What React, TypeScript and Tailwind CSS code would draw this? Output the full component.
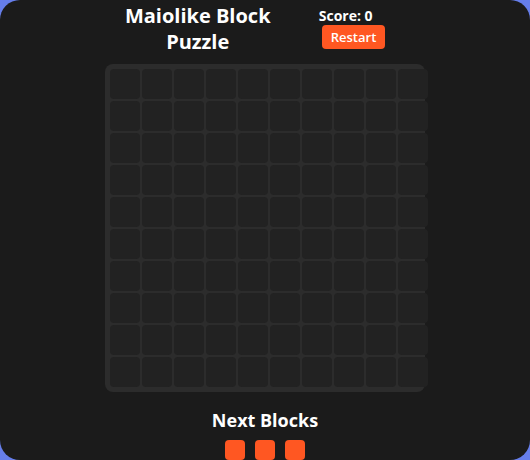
import React from "react";

export default function App() {
  const cells = Array.from({ length: 100 });
  return (
    <div className="w-[530px] h-[460px] bg-[#667eea] overflow-hidden" style={{ fontFamily: '"Open Sans", "Noto Sans", sans-serif' }}>
      <div className="w-full h-full bg-[#1b1b1b] rounded-[20px] flex flex-col items-center text-white overflow-hidden">
        <div className="flex items-start justify-center gap-[48px] pt-[3px] mr-[20px]">
          <h1 className="w-[146px] text-center text-[20px] leading-[26px] font-bold">Maiolike Block Puzzle</h1>
          <div className="flex flex-col items-start pt-[6px]">
            <div className="text-[14px] leading-[14px] font-bold">Score: 0</div>
            <button className="mt-[2px] ml-[3px] bg-[#ff5722] text-white text-[13px] font-semibold rounded-[4px] px-[9px] h-[24px] leading-[24px]">Restart</button>
          </div>
        </div>
        <div className="mt-[9px] w-[320px] bg-[#2c2c2c] rounded-[8px] p-[5px]">
          <div className="grid grid-cols-[repeat(10,30px)] gap-[2px]">
            {cells.map((_, i) => (
              <div key={i} className="w-[30px] h-[30px] bg-[#222222] rounded-[4px]" />
            ))}
          </div>
        </div>
        <div className="mt-[16px] text-[18px] leading-[24px] font-bold">Next Blocks</div>
        <div className="mt-[8px] flex gap-[10px]">
          <div className="w-[20px] h-[20px] bg-[#ff5722] rounded-[4px]" />
          <div className="w-[20px] h-[20px] bg-[#ff5722] rounded-[4px]" />
          <div className="flex flex-col gap-[2px]">
            <div className="w-[20px] h-[20px] bg-[#ff5722] rounded-[4px]" />
            <div className="w-[20px] h-[20px] bg-[#ff5722] rounded-[4px]" />
          </div>
        </div>
      </div>
    </div>
  );
}
